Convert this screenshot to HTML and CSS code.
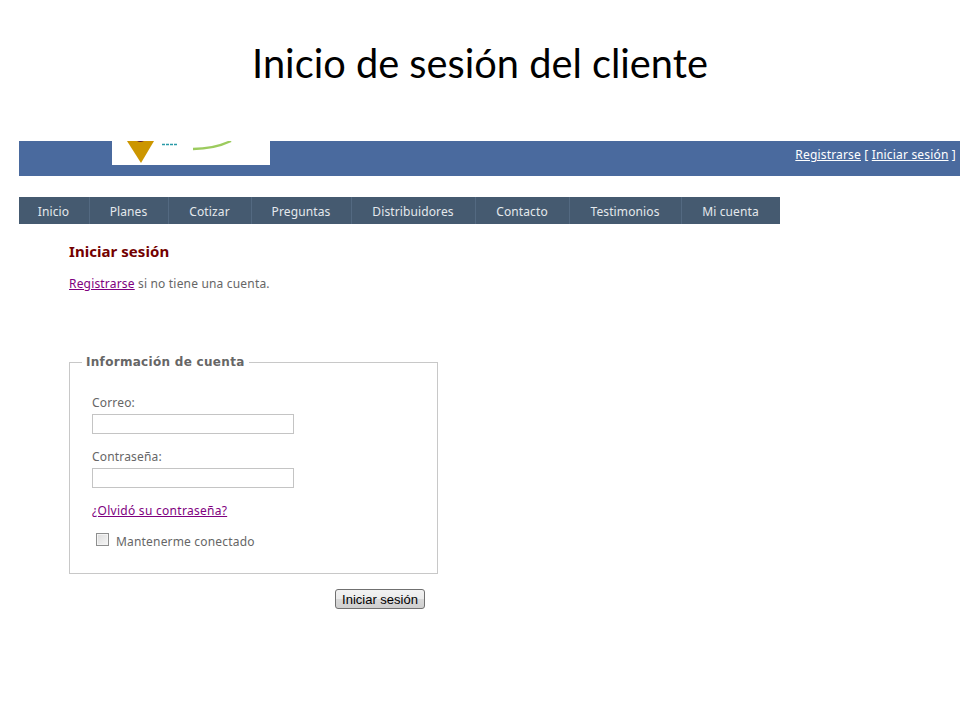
FILE: index.html
```html
<!DOCTYPE html>
<html lang="es">
<head>
<meta charset="utf-8">
<title>Inicio de sesión del cliente</title>
<link rel="stylesheet" href="styles.css">
</head>
<body>
<h1 class="slide-title">Inicio de sesión del cliente</h1>
<div class="site">
  <header class="topbar">
    <div class="logo">
      <svg width="158" height="24" viewBox="0 0 158 24" aria-hidden="true">
        <polygon points="15,0 42,0 29,22" fill="#cc9600"/>
        <path d="M25 0 Q28 2 32 0Z" fill="#5a1c3c"/>
        <path d="M50 3.5H66" stroke="#2a9aa8" stroke-width="1.4" stroke-dasharray="3 1" fill="none"/>
        <path d="M81 8 Q102 8 119 0" stroke="#9ccb5e" stroke-width="2.4" fill="none"/>
      </svg>
    </div>
    <div class="account"><a href="#">Registrarse</a> [ <a href="#">Iniciar sesión</a> ]</div>
  </header>
  <nav class="menu">
    <a href="#">Inicio</a>
    <a href="#">Planes</a>
    <a href="#">Cotizar</a>
    <a href="#">Preguntas</a>
    <a href="#">Distribuidores</a>
    <a href="#">Contacto</a>
    <a href="#">Testimonios</a>
    <a href="#">Mi cuenta</a>
  </nav>
  <main class="content">
    <h2 class="page-heading">Iniciar sesión</h2>
    <p class="intro"><a href="#">Registrarse</a> si no tiene una cuenta.</p>
    <form class="login">
      <fieldset class="box">
        <legend>Información de cuenta</legend>
        <label class="field">Correo:<input type="text"></label>
        <label class="field">Contraseña:<input type="password"></label>
        <a class="forgot" href="#">¿Olvidó su contraseña?</a>
        <label class="remember"><span class="check"></span>Mantenerme conectado</label>
      </fieldset>
      <div class="actions"><button type="button">Iniciar sesión</button></div>
    </form>
  </main>
</div>
</body>
</html>
```
FILE: styles.css
```css
* { box-sizing: border-box; }
html, body { margin: 0; padding: 0; background: #fff; }
body { width: 960px; height: 720px; overflow: hidden; font-family: "Noto Sans", "Open Sans", sans-serif; font-size: 12px; letter-spacing: 0.18px; color: #666; }
.slide-title { margin: 0; height: 141px; padding-top: 38px; text-align: center; font-family: Lato, sans-serif; font-weight: 400; font-size: 39.75px; line-height: 50px; letter-spacing: 0; color: #000; }
.site { padding-left: 19px; }
.topbar { height: 35px; background: #4a6a9e; display: flex; justify-content: space-between; padding-left: 93px; padding-right: 4px; }
.logo { width: 158px; height: 24px; background: #fff; }
.logo svg { display: block; }
.account { padding-top: 5px; line-height: 17px; color: #fff; font-size: 12px; }
.account a { color: #fff; }
.menu { margin-top: 21px; width: 761px; height: 27px; display: grid; grid-template-columns: 71px 79px 83px 100px 124px 94px 112px 98px; background: #455a70; }
.menu a { display: flex; align-items: center; justify-content: center; padding-top: 2px; padding-right: 1px; color: #e4e8ec; letter-spacing: 0.12px; text-decoration: none; font-size: 12px; border-right: 1px solid #536981; }
.menu a:last-child { border-right: 0; }
.content { padding-left: 50px; }
.page-heading { margin: 17px 0 0; font-size: 15px; line-height: 20px; font-weight: 700; letter-spacing: 0.05px; color: #730000; }
.intro { margin: 14px 0 0; line-height: 17px; }
a { color: #800080; }
.login { width: 369px; margin-top: 61px; }
.box { margin: 0; padding: 23px 22px 0 22px; width: 369px; height: 221px; border: 1px solid #c8c8c8; min-width: 0; }
.box legend { margin-left: -10px; padding: 0 4px; font-family: "DejaVu Sans", sans-serif; font-size: 12px; font-weight: 700; letter-spacing: 0.3px; line-height: 18px; color: #666; }
.field { display: block; line-height: 17px; margin-bottom: 14px; }
.field input { display: block; width: 202px; height: 20px; margin-top: 3px; border: 1px solid #c4c4c4; background: #fff; padding: 0; }
.forgot { display: block; line-height: 17px; margin-top: 14px; width: max-content; letter-spacing: 0.28px; }
.remember { display: flex; align-items: center; margin-top: 14px; margin-left: 4px; line-height: 17px; }
.check { width: 13px; height: 13px; margin-right: 7px; margin-top: -4px; border: 1px solid #8e8f8f; background: linear-gradient(135deg, #dcdcdc, #f6f6f6); box-shadow: inset 0 0 0 1px #f4f4f4; }
.actions { display: flex; justify-content: flex-end; padding-right: 13px; margin-top: 15px; }
.actions button { width: 90px; height: 20px; padding: 2px 0 0; border: 1px solid #707070; border-radius: 3px; background: linear-gradient(#f2f2f2 0%, #ebebeb 48%, #d8d8d8 52%, #cfcfcf 100%); font-family: "Liberation Sans", sans-serif; font-size: 13px; letter-spacing: 0; color: #000; line-height: 16px; }
```
